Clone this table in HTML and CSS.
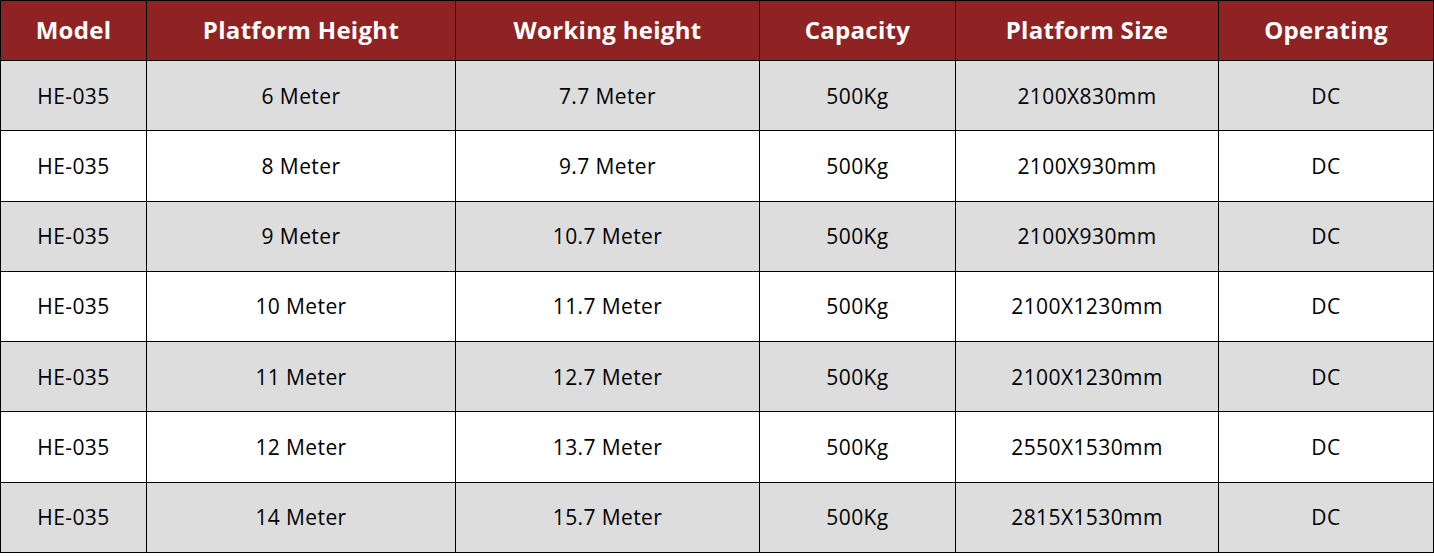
FILE: index.html
```html
<!DOCTYPE html>
<html lang="en">
<head>
<meta charset="utf-8">
<title>Specifications</title>
<link rel="stylesheet" href="styles.css">
</head>
<body>
<table class="spec">
  <colgroup>
    <col class="c1"><col class="c2"><col class="c3"><col class="c4"><col class="c5"><col class="c6">
  </colgroup>
  <thead>
    <tr><th>Model</th><th>Platform Height</th><th>Working height</th><th>Capacity</th><th>Platform Size</th><th>Operating</th></tr>
  </thead>
  <tbody>
    <tr><td>HE-035</td><td>6 Meter</td><td>7.7 Meter</td><td>500Kg</td><td>2100X830mm</td><td>DC</td></tr>
    <tr><td>HE-035</td><td>8 Meter</td><td>9.7 Meter</td><td>500Kg</td><td>2100X930mm</td><td>DC</td></tr>
    <tr><td>HE-035</td><td>9 Meter</td><td>10.7 Meter</td><td>500Kg</td><td>2100X930mm</td><td>DC</td></tr>
    <tr><td>HE-035</td><td>10 Meter</td><td>11.7 Meter</td><td>500Kg</td><td>2100X1230mm</td><td>DC</td></tr>
    <tr><td>HE-035</td><td>11 Meter</td><td>12.7 Meter</td><td>500Kg</td><td>2100X1230mm</td><td>DC</td></tr>
    <tr><td>HE-035</td><td>12 Meter</td><td>13.7 Meter</td><td>500Kg</td><td>2550X1530mm</td><td>DC</td></tr>
    <tr><td>HE-035</td><td>14 Meter</td><td>15.7 Meter</td><td>500Kg</td><td>2815X1530mm</td><td>DC</td></tr>
  </tbody>
</table>
</body>
</html>
```
FILE: styles.css
```css
html, body {
  margin: 0;
  padding: 0;
  background: #ffffff;
}
.spec {
  border-collapse: collapse;
  table-layout: fixed;
  width: 1433px;
  height: 553px;
  font-family: "Open Sans", "Liberation Sans", sans-serif;
}
.c1 { width: 146px; }
.c2 { width: 309px; }
.c3 { width: 304px; }
.c4 { width: 196px; }
.c5 { width: 263px; }
.c6 { width: 215px; }
.spec th,
.spec td {
  border: 1px solid #000;
  text-align: center;
  vertical-align: middle;
  padding: 0;
}
.spec thead tr {
  height: 60px;
}
.spec th {
  padding-bottom: 3px;
  background: #8f2323;
  color: #fff;
  font-size: 24px;
  font-weight: 700;
  letter-spacing: 0.3px;
}
.spec td {
  font-size: 21px;
  font-weight: 400;
  letter-spacing: 0.4px;
  color: #000;
}
.spec tbody tr:nth-child(odd) td {
  background: #dddddd;
}
```
